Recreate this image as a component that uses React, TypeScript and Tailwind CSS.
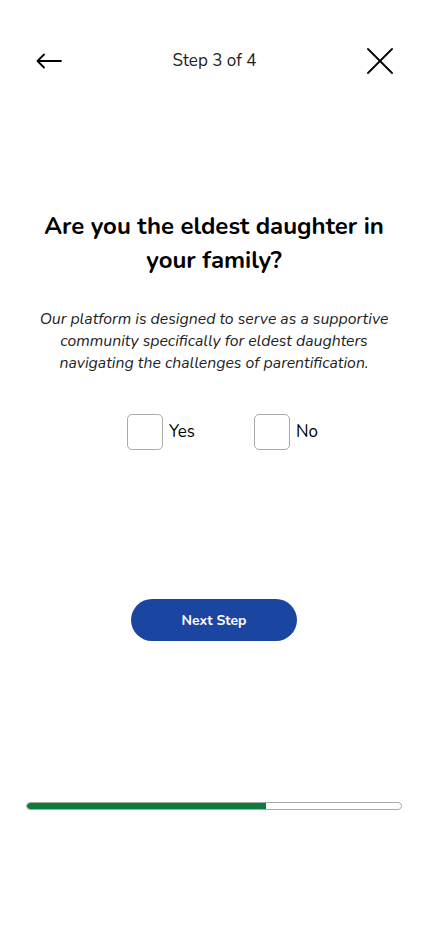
import React, { useState } from 'react';

const font = { fontFamily: '"Nunito", Lato, "Noto Sans", sans-serif' };

const App: React.FC = () => {
  const [answer, setAnswer] = useState<'yes' | 'no' | null>(null);

  return (
    <div className="min-h-[926px] w-full bg-white text-black" style={font}>
      {/* Header */}
      <div className="flex h-8 items-center justify-between pl-[36px] pr-[35px] mt-[45px]">
        <button className="flex h-8 w-7 items-center">
          <svg width="26" height="16" viewBox="0 0 26 16" fill="none" stroke="black" strokeWidth="1.8" strokeLinecap="round" strokeLinejoin="round">
            <path d="M25 8H2" />
            <path d="M8 1.5L1.5 8L8 14.5" />
          </svg>
        </button>
        <div className="text-[17px] text-[#222]">Step 3 of 4</div>
        <button className="flex h-8 w-7 items-center justify-end">
          <svg width="26" height="26" viewBox="0 0 26 26" fill="none" stroke="black" strokeWidth="1.8" strokeLinecap="round">
            <path d="M1 1L25 25" />
            <path d="M25 1L1 25" />
          </svg>
        </button>
      </div>

      {/* Question */}
      <h1 className="mx-auto mt-[132px] w-[350px] text-center text-[24px] font-bold leading-[34px]">
        Are you the eldest daughter in your family?
      </h1>
      <p className="mx-auto mt-[31px] w-[372px] text-center text-[15.8px] italic leading-[22px] text-[#222]">
        Our platform is designed to serve as a supportive community specifically for eldest daughters navigating the challenges of parentification.
      </p>

      {/* Options */}
      <div className="mt-[40px] flex justify-center gap-[59px] pl-[17px]">
        <label className="flex cursor-pointer items-center gap-[6px]" onClick={() => setAnswer('yes')}>
          <span className={`block h-9 w-9 rounded-[5px] border ${answer === 'yes' ? 'border-[#1a45a0] bg-[#1a45a0]' : 'border-[#aaa]'}`} />
          <span className="text-[17px]">Yes</span>
        </label>
        <label className="flex cursor-pointer items-center gap-[6px]" onClick={() => setAnswer('no')}>
          <span className={`block h-9 w-9 rounded-[5px] border ${answer === 'no' ? 'border-[#1a45a0] bg-[#1a45a0]' : 'border-[#aaa]'}`} />
          <span className="text-[17px]">No</span>
        </label>
      </div>

      {/* Next */}
      <div className="mt-[149px] flex justify-center">
        <button className="h-[42px] w-[166px] rounded-full bg-[#1a45a0] text-[14px] font-bold text-white">
          Next Step
        </button>
      </div>

      {/* Progress */}
      <div className="mx-[26px] mt-[161px] h-2 overflow-hidden rounded-full border border-[#aaa]">
        <div className="h-full w-[64%] rounded-l-full bg-[#0b7a3b]" />
      </div>
    </div>
  );
};

export default App;
